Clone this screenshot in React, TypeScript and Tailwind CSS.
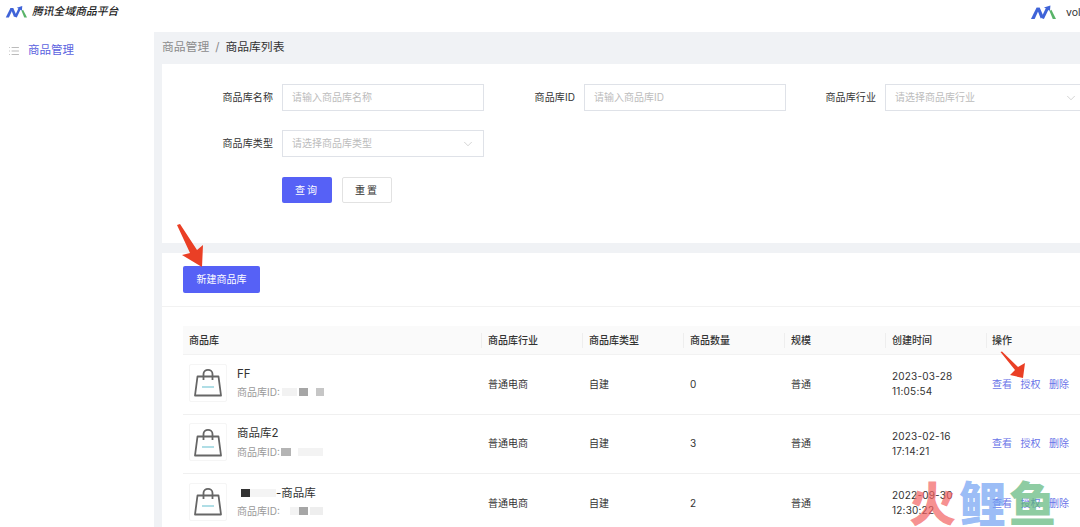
import { ChevronDown, List } from 'lucide-react'

const font = { fontFamily: '"Inter", "Noto Sans CJK SC", sans-serif' }

const rows = [
  {
    label: 'FF', industry: '普通电商', type: '自建', count: '0', scale: '普通', date: '2023-03-28', time: '11:05:54',
    blurs: ['left-[45px] w-[15px] bg-[#f2f2f2]', 'left-[62px] w-[9px] bg-[#a6a6a6]', 'left-[79px] w-[8px] bg-[#c6c6c6]'],
  },
  {
    label: '商品库2', industry: '普通电商', type: '自建', count: '3', scale: '普通', date: '2023-02-16', time: '17:14:21',
    blurs: ['left-[44px] w-[10px] bg-[#b4b4b4]', 'left-[61px] w-[25px] bg-[#f3f3f3]'],
  },
  {
    label: '-商品库', redacted: true, industry: '普通电商', type: '自建', count: '2', scale: '普通', date: '2022-09-30', time: '12:30:22',
    blurs: ['left-[53px] w-[9px] bg-[#f3f3f3]', 'left-[62px] w-[9px] bg-[#a6a6a6]', 'left-[73px] w-[13px] bg-[#eeeeee]'],
  },
]

function Logo({ className }: { className: string }) {
  return (
    <svg viewBox="0 0 28 16" className={className}>
      <path d="M1 15 L7 3 L10.5 3 L5 15 Z" fill="#3f63d8" />
      <path d="M7 3 L10.5 3 L14.5 12 L11.5 14.5 Z" fill="#3f63d8" />
      <path d="M12 14 L17 3.5 L15 2.5 L22 0.5 L21.5 6.5 L19.7 5.2 L15 15 Z" fill="#3f63d8" />
      <path d="M21 6.5 L23 5 L28 15 L24.5 15 Z" fill="#58b368" />
    </svg>
  )
}

function Field({ label, placeholder, select, width }: { label: string; placeholder: string; select?: boolean; width: string }) {
  return (
    <div className={`flex shrink-0 items-center ${width}`}>
      <span className="w-[100px] shrink-0 pr-[9px] text-right text-[10px] tracking-[0.1px] text-[#333]">{label}</span>
      <div className="flex h-[27px] w-[202px] shrink-0 items-center justify-between border border-[#dfe2e8] pl-[9px] pr-[8px] text-[10px] text-[#bcbcbc]">
        <span>{placeholder}</span>
        {select && <ChevronDown size={14} strokeWidth={1} className="text-[#b5b5b5]" />}
      </div>
    </div>
  )
}

function BagIcon() {
  return (
    <div className="flex h-[38px] w-[38px] shrink-0 items-center justify-center rounded-[2px] border border-[#f5f5f5]">
      <svg viewBox="0 0 30 29" className="h-[29px] w-[30px]" fill="none">
        <path d="M4.5 8.5 H25.5 L28 27.5 H2 Z" stroke="#666" strokeWidth="1.8" strokeLinejoin="round" />
        <path d="M10.5 12 V6 C10.5 0.5 19.5 0.5 19.5 6 V12" stroke="#666" strokeWidth="1.8" />
        <path d="M9 19 H21" stroke="#8fd0dc" strokeWidth="1.4" />
      </svg>
    </div>
  )
}

export default function App() {
  return (
    <div style={font} className="relative h-[527px] w-[1080px] overflow-hidden bg-[#f0f2f5]">
      {/* Header */}
      <div className="flex h-[32px] items-start justify-between bg-white">
        <div className="flex items-center pl-[5px] pt-[3px]">
          <Logo className="h-[14px] w-[22px]" />
          <span className="ml-[5px] mt-[1px] text-[10.8px] font-medium italic text-[#222]">腾讯全域商品平台</span>
        </div>
        <div className="flex items-center pt-[4px]">
          <Logo className="h-[17px] w-[26px]" />
          <span className="ml-[10px] w-[14px] overflow-hidden text-[10.5px] text-[#333]">vol</span>
        </div>
      </div>

      <div className="flex">
        {/* Sidebar */}
        <div className="h-[495px] w-[154px] shrink-0 bg-white">
          <div className="flex items-center pl-[8px] pt-[10px] text-[#5b63e0]">
            <List size={12} strokeWidth={1} className="text-[#777]" />
            <span className="ml-[8px] text-[11.5px]">商品管理</span>
          </div>
        </div>

        {/* Main */}
        <div className="w-[926px] shrink-0 pl-[8px]">
          <div className="flex h-[32px] items-center text-[11.8px]">
            <span className="text-[#8c8c8c]">商品管理</span>
            <span className="mx-[6px] text-[#8c8c8c]">/</span>
            <span className="text-[#333]">商品库列表</span>
          </div>

          {/* Search form */}
          <div className="h-[179px] w-[918px] overflow-hidden bg-white pl-[20px] pt-[20px]">
            <div className="flex">
              <Field width="w-[302px]" label="商品库名称" placeholder="请输入商品库名称" />
              <Field width="w-[301px]" label="商品库ID" placeholder="请输入商品库ID" />
              <Field width="w-[302px]" label="商品库行业" placeholder="请选择商品库行业" select />
            </div>
            <div className="mt-[19px] flex">
              <Field width="w-[302px]" label="商品库类型" placeholder="请选择商品库类型" select />
            </div>
            <div className="ml-[100px] mt-[20px] flex gap-[10px]">
              <button className="h-[26px] w-[50px] rounded-[2px] bg-[#5661f6] text-[10px] tracking-[2px] text-white">查询</button>
              <button className="h-[26px] w-[50px] rounded-[2px] border border-[#e2e2e2] bg-white text-[10px] tracking-[2px] text-[#333]">重置</button>
            </div>
          </div>

          {/* List */}
          <div className="mt-[10px] h-[274px] w-[918px] bg-white">
            <div className="border-b border-[#f2f2f2] pb-[13px] pl-[21px] pt-[13px]">
              <button className="block h-[27px] w-[77px] rounded-[2px] bg-[#5661f6] text-[10px] text-white">新建商品库</button>
            </div>

            <div className="ml-[21px] mt-[19px] w-[904px] text-[10px] text-[#333]">
              <div className="grid h-[29px] grid-cols-[298px_101px_101px_101px_101px_101px_101px] items-center border-b border-[#f2f2f2] bg-[#fafafa] font-medium">
                {['商品库', '商品库行业', '商品库类型', '商品数量', '规模', '创建时间', '操作'].map((title, i) => (
                  <div key={title} className={i === 0 ? 'pl-[6px]' : i === 6 ? 'border-l border-[#eeeeee] pl-[5px]' : 'border-l border-[#eeeeee] pl-[6px]'}>{title}</div>
                ))}
              </div>
              {rows.map((row) => (
                <div key={row.date} className="grid h-[59.5px] grid-cols-[298px_101px_101px_101px_101px_101px_101px] items-center border-b border-[#f0f0f0]">
                  <div className="flex items-center pb-[3px] pl-[6px]">
                    <BagIcon />
                    <div className="ml-[10px]">
                      <div className="flex h-[18px] items-center text-[11.5px] text-[#333]">
                        {row.redacted && (
                          <>
                            <span className="ml-[4px] h-[8px] w-[9px] bg-[#333]" />
                            <span className="h-[8px] w-[26px] bg-[#f4f4f4]" />
                          </>
                        )}
                        {row.label}
                      </div>
                      <div className="relative mt-[2px] text-[10px] text-[#999]">
                        商品库ID:
                        {row.blurs.map((blur) => (
                          <span key={blur} className={`absolute top-[3px] h-[8px] ${blur}`} />
                        ))}
                      </div>
                    </div>
                  </div>
                  <div className="pl-[7px]">{row.industry}</div>
                  <div className="pl-[7px]">{row.type}</div>
                  <div className="pl-[7px]">{row.count}</div>
                  <div className="pl-[7px]">{row.scale}</div>
                  <div className="pl-[7px] leading-[15px] tracking-[0.2px]">
                    {row.date}
                    <br />
                    {row.time}
                  </div>
                  <div className="flex gap-[8.5px] pl-[6px] text-[#6a74e8]">
                    <span>查看</span>
                    <span>授权</span>
                    <span>删除</span>
                  </div>
                </div>
              ))}
            </div>
          </div>
        </div>
      </div>

      {/* Annotation arrows */}
      <svg viewBox="0 0 30 45" className="absolute left-[175px] top-[223px] h-[45px] w-[30px]">
        <path d="M2 2 L5 1 L22 27 L28 22 L27 44 L7 32 L15 30 Z" fill="#ea3f25" />
      </svg>
      <svg viewBox="0 0 26 28" className="absolute left-[1000px] top-[351px] h-[28px] w-[26px]">
        <path d="M0.5 1 L2 0.5 L18 16 L25 12 L23 27 L10 24 L15 19 Z" fill="#ea3f25" />
      </svg>

      {/* Watermark */}
      <div className="absolute left-[909px] top-[480px] flex text-[47px] font-black leading-[47px] tracking-[3px]">
        <span className="text-[#f25f5f]/70">火</span>
        <span className="text-[#6f9ff2]/70">鲤</span>
        <span className="text-[#5cb578]/70">鱼</span>
      </div>
    </div>
  )
}
